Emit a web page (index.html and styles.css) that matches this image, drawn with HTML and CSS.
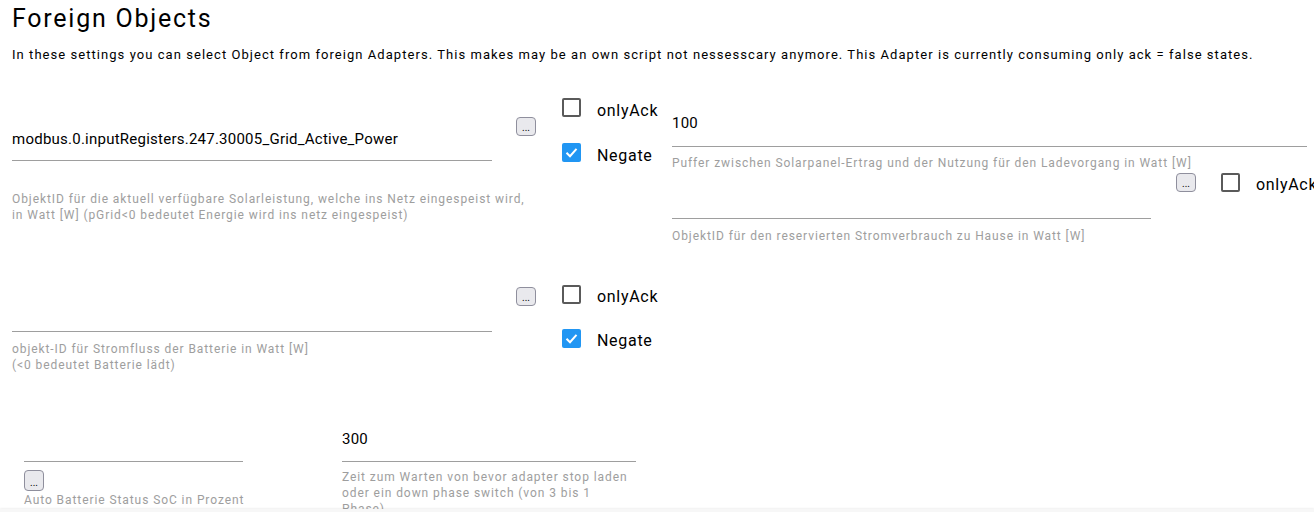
FILE: index.html
```html
<!DOCTYPE html>
<html lang="de">
<head>
<meta charset="utf-8">
<title>Foreign Objects</title>
<link rel="stylesheet" href="styles.css">
</head>
<body>
<div class="page">
  <h1 class="title">Foreign Objects</h1>
  <p class="intro">In these settings you can select Object from foreign Adapters. This makes may be an own script not nessesscary anymore. This Adapter is currently consuming only ack = false states.</p>

  <div class="row row-1">
    <div class="obj obj-480">
      <div class="field field-r1"><span class="value">modbus.0.inputRegisters.247.30005_Grid_Active_Power</span></div>
      <div class="help help-r1">ObjektID für die aktuell verfügbare Solarleistung, welche ins Netz eingespeist wird,<br>in Watt [W] (pGrid&lt;0 bedeutet Energie wird ins netz eingespeist)</div>
    </div>
    <button class="pick pick-r1" type="button">...</button>
    <div class="checks checks-r1">
      <label class="check"><span class="box"></span><span class="check-label">onlyAck</span></label>
      <label class="check"><span class="box box-on"><svg viewBox="0 0 19 19" width="19" height="19"><path d="M4.5 9.8 L8 13.2 L14.5 5.8" fill="none" stroke="#fff" stroke-width="2"/></svg></span><span class="check-label">Negate</span></label>
    </div>
    <div class="right">
      <div class="field field-num"><span class="value">100</span></div>
      <div class="help help-num">Puffer zwischen Solarpanel-Ertrag und der Nutzung für den Ladevorgang in Watt [W]</div>
      <div class="subrow">
        <div class="field field-sub"><span class="value"></span></div>
        <button class="pick pick-sub" type="button">...</button>
        <label class="check check-sub"><span class="box"></span><span class="check-label">onlyAck</span></label>
      </div>
      <div class="help help-sub">ObjektID für den reservierten Stromverbrauch zu Hause in Watt [W]</div>
    </div>
  </div>

  <div class="row row-2">
    <div class="obj obj-480">
      <div class="field field-r2"><span class="value"></span></div>
      <div class="help help-r2">objekt-ID für Stromfluss der Batterie in Watt [W]<br>(&lt;0 bedeutet Batterie lädt)</div>
    </div>
    <button class="pick pick-r2" type="button">...</button>
    <div class="checks checks-r2">
      <label class="check"><span class="box"></span><span class="check-label">onlyAck</span></label>
      <label class="check"><span class="box box-on"><svg viewBox="0 0 19 19" width="19" height="19"><path d="M4.5 9.8 L8 13.2 L14.5 5.8" fill="none" stroke="#fff" stroke-width="2"/></svg></span><span class="check-label">Negate</span></label>
    </div>
  </div>

  <div class="row row-3">
    <div class="obj obj-soc">
      <div class="field field-r3"><span class="value"></span></div>
      <button class="pick pick-r3" type="button">...</button>
      <div class="help help-soc">Auto Batterie Status SoC in Prozent<br>(0-100)</div>
    </div>
    <div class="obj obj-wait">
      <div class="field field-r3"><span class="value">300</span></div>
      <div class="help help-wait">Zeit zum Warten von bevor adapter stop laden<br>oder ein down phase switch (von 3 bis 1<br>Phase)</div>
    </div>
  </div>
</div>
<div class="footer-shadow"></div>
</body>
</html>
```

FILE: styles.css
```css
html, body {
  margin: 0;
  padding: 0;
  overflow: hidden;
  background: #fff;
}

body {
  font-family: Roboto, "Liberation Sans", sans-serif;
  color: #000;
}

.page {
  padding: 0 12px;
  width: 1314px;
  box-sizing: border-box;
}

.title {
  margin: 2px 0 0;
  font-size: 25px;
  line-height: 33px;
  font-weight: 400;
  letter-spacing: 1.75px;
}

.intro {
  margin: 10px 0 0;
  font-size: 13px;
  line-height: 20px;
  letter-spacing: 1.05px;
  white-space: nowrap;
}

.row {
  display: flex;
  align-items: flex-start;
}

.row-1 { margin-top: 33px; }
.row-2 { margin-top: 41px; }
.row-3 { margin-top: 42px; }

.obj { flex: none; }
.obj-480 { width: 480px; }
.obj-soc { width: 219px; margin-left: 12px; }
.obj-wait { width: 294px; margin-left: 99px; }

.field {
  border-bottom: 1px solid #9e9e9e;
  padding-bottom: 11px;
}

.value {
  display: block;
  height: 22px;
  font-size: 15px;
  line-height: 24px;
  letter-spacing: 0.24px;
  white-space: nowrap;
}

.field-r1 { padding-top: 29px; }
.field-num { padding-top: 13px; padding-bottom: 13px; }
.field-sub { width: 479px; padding-top: 14px; flex: none; }
.field-r2 { padding-top: 13px; }
.field-r3 { padding-top: 12px; padding-bottom: 12px; }

.help {
  font-size: 12px;
  line-height: 16px;
  letter-spacing: 0.92px;
  color: #9e9e9e;
  white-space: nowrap;
}

.help-r1 { margin-top: 30px; }
.help-num { margin-top: 8px; }
.help-sub { margin-top: 9px; }
.help-r2 { margin-top: 9px; }
.help-soc { margin-top: 1px; }
.help-wait { margin-top: 7px; }

.pick {
  flex: none;
  width: 20px;
  height: 19px;
  padding: 0 0 2px;
  box-sizing: border-box;
  border: 1px solid #8f8f9d;
  border-radius: 4px;
  background: #e9e9ed;
  font-family: Roboto, sans-serif;
  font-size: 10px;
  line-height: 10px;
  color: #000;
  display: flex;
  align-items: flex-end;
  justify-content: center;
}

.pick-r1 { margin: 19px 0 0 24px; }
.pick-sub { margin: 2px 0 0 25px; }
.pick-r2 { margin: 2px 0 0 24px; }
.pick-r3 { margin: 8px 0 0 0; height: 21px; }

.checks {
  flex: none;
  width: 110px;
  margin-left: 26px;
  display: flex;
  flex-direction: column;
}

.checks-r1 { gap: 26px; }
.checks-r2 { gap: 25px; }

.check {
  display: flex;
  align-items: flex-start;
  height: 19px;
  white-space: nowrap;
}

.check-sub {
  margin: 2px 0 0 25px;
}

.box {
  flex: none;
  width: 19px;
  height: 19px;
  box-sizing: border-box;
  border: 2px solid #5a5a5a;
  border-radius: 2px;
}

.box-on {
  border: none;
  background: #2196f3;
}

.box-on svg { display: block; }

.check-label {
  margin: 2px 0 0 16px;
  font-size: 16px;
  line-height: 19px;
  letter-spacing: 0.7px;
}

.checks-r1 .check-label { margin-top: 3px; }

.right {
  flex: none;
  width: 635px;
}

.subrow {
  display: flex;
  align-items: flex-start;
}

.footer-shadow {
  position: fixed;
  left: 0;
  right: 0;
  bottom: 0;
  height: 3px;
  background: #f7f7f7;
  box-shadow: 0 -1px 2px rgba(0, 0, 0, 0.06);
}
```
